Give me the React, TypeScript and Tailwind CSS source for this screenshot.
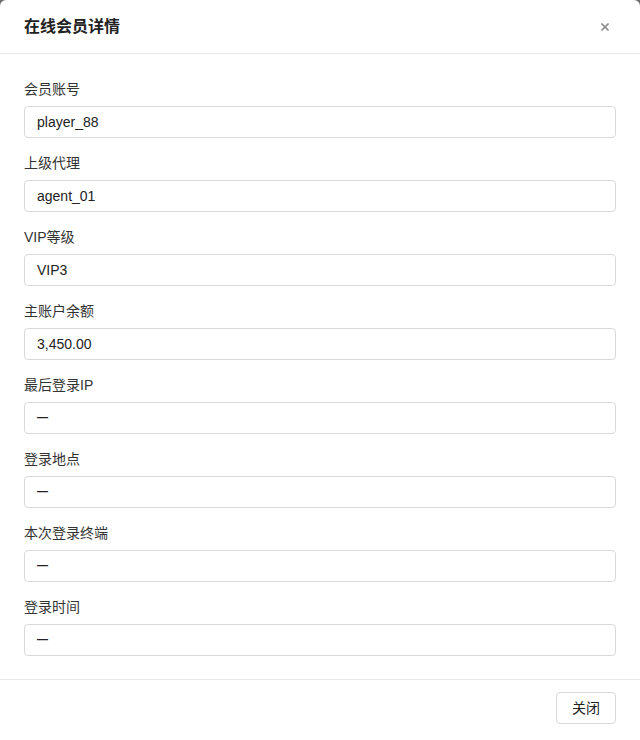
import { X } from 'lucide-react';

const fields = [
  { label: '会员账号', value: 'player_88' },
  { label: '上级代理', value: 'agent_01' },
  { label: 'VIP等级', value: 'VIP3' },
  { label: '主账户余额', value: '3,450.00' },
  { label: '最后登录IP', value: '—' },
  { label: '登录地点', value: '—' },
  { label: '本次登录终端', value: '—' },
  { label: '登录时间', value: '—' },
];

export default function App() {
  return (
    <div
      className="w-[640px] h-[740px] bg-[#6b6b6b] overflow-hidden"
      style={{ fontFamily: '"Liberation Sans", "Noto Sans CJK SC", sans-serif' }}
    >
      <div className="h-[760px] bg-white rounded-md flex flex-col">
        {/* Header */}
        <div className="h-[54px] px-6 flex items-center justify-between border-b border-[#e9e9e9]">
          <h2 className="text-base font-bold text-[#222]">在线会员详情</h2>
          <button className="text-[#8a8a8a] mr-[5px]">
            <X className="w-3 h-3" strokeWidth={3.5} />
          </button>
        </div>

        {/* Body */}
        <div className="px-6 pt-[25px] pb-[23px] border-b border-[#e9e9e9]">
          {fields.map((f, i) => (
            <div key={i} className={i < fields.length - 1 ? 'mb-[15px]' : ''}>
              <label className="block text-sm leading-5 text-[#333] mb-[7px]">{f.label}</label>
              <div className="h-8 px-3 flex items-center border border-[#d9d9d9] rounded-[4px] text-sm text-[#222]">
                {f.value === '—' ? <span className="text-[11px] font-bold">{f.value}</span> : f.value}
              </div>
            </div>
          ))}
        </div>

        {/* Footer */}
        <div className="px-6 pt-[12px] flex justify-end">
          <button className="h-8 px-[15px] text-sm text-[#222] border border-[#d9d9d9] rounded-[4px] bg-white">
            关闭
          </button>
        </div>
      </div>
    </div>
  );
}
